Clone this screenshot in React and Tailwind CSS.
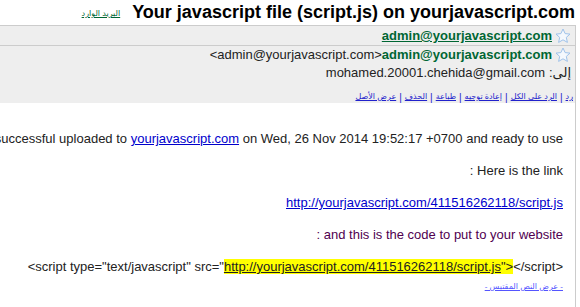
import React from 'react';

const Star = () => (
  <svg width="16" height="16" viewBox="0 0 16 16" className="shrink-0">
    <polygon
      points="8,1 10.1,5.6 15,6.1 11.3,9.4 12.4,14.4 8,11.8 3.6,14.4 4.7,9.4 1,6.1 5.9,5.6"
      fill="#f4f8fd"
      stroke="#9fc2ea"
      strokeWidth="1"
      strokeLinejoin="round"
    />
  </svg>
);

const actions = ['رد', 'الرد على الكل', 'إعادة توجيه', 'طباعة', 'الحذف', 'عرض الأصل'];

const App = () => {
  return (
    <div className="w-[580px] h-[307px] overflow-hidden bg-white text-[#222] font-['Liberation_Sans','DejaVu_Sans',Arial,sans-serif]">
      {/* Subject line */}
      <div className="h-[25px] flex items-center justify-end pr-[5px]">
        <a href="#" className="text-[8px] leading-none text-[#006633] underline mr-3 mt-[3px]">
          البريد الوارد
        </a>
        <h1 className="text-[18px] font-bold leading-[25px] text-black whitespace-nowrap">
          Your javascript file (script.js) on yourjavascript.com
        </h1>
      </div>

      <div className="w-[576px] h-[282px] border-r border-[#cccccc]">
        {/* Collapsed message row */}
        <div className="border-t border-[#cccccc] bg-[#eeeeee] h-[20px] flex items-center justify-end gap-[3px] pr-[4px]">
          <a href="#" className="text-[13px] font-bold text-[#006633] underline leading-none">
            admin@yourjavascript.com
          </a>
          <Star />
        </div>

        {/* Open message header */}
        <div className="border-t border-[#cccccc] bg-[#eeeeee] h-[58px]">
          <div className="h-[18px] flex items-center justify-end pr-[4px] text-[13px] whitespace-nowrap">
            <span>&lt;admin@yourjavascript.com&gt;</span>
            <span className="font-bold text-[#006633] mr-[3px]">admin@yourjavascript.com</span>
            <Star />
          </div>
          <div className="h-[18px] flex items-center justify-end pr-[4px] text-[13px] whitespace-nowrap">
            <span>mohamed.20001.chehida@gmail.com</span>
            <span dir="rtl" className="ml-[4px]">إلى:</span>
          </div>
          <div dir="rtl" className="mt-[8px] h-[14px] flex items-center pr-[2px] text-[8px] text-[#2222cc] whitespace-nowrap">
            {actions.map((label, i) => (
              <span key={label} className="flex items-center">
                {i > 0 && <span className="px-[3px] text-[10px]">|</span>}
                <a href="#" className="underline">{label}</a>
              </span>
            ))}
          </div>
        </div>

        {/* Message body */}
        <div className="pt-[28px] pr-[12px] text-[13px] leading-4">
          <div dir="rtl" className="whitespace-nowrap">
            successful uploaded to{' '}
            <a href="#" className="text-[#0000cc] underline">yourjavascript.com</a>
            {' '}on Wed, 26 Nov 2014 19:52:17 +0700 and ready to use
          </div>
          <div dir="rtl" className="mt-4 whitespace-nowrap">Here is the link :</div>
          <div dir="rtl" className="mt-4 whitespace-nowrap">
            <a href="#" className="text-[#0000cc] underline">http://yourjavascript.com/411516262118/script.js</a>
          </div>
          <div dir="rtl" className="mt-4 whitespace-nowrap text-[#500050]">
            and this is the code to put to your website :
          </div>
          <div dir="ltr" className="mt-4 whitespace-nowrap text-right">
            &lt;script type="text/javascript" src="
            <span className="bg-[#ffff00]">
              <a href="#" className="underline">http://yourjavascript.com/411516262118/script.js</a>"&gt;
            </span>
            &lt;/script&gt;
          </div>
          <div dir="rtl" className="mt-[5px] text-[8px] leading-[14px]">
            <a href="#" className="text-[#5555ff] underline">- عرض النص المقتبس -</a>
          </div>
        </div>
      </div>
    </div>
  );
};

export default App;
